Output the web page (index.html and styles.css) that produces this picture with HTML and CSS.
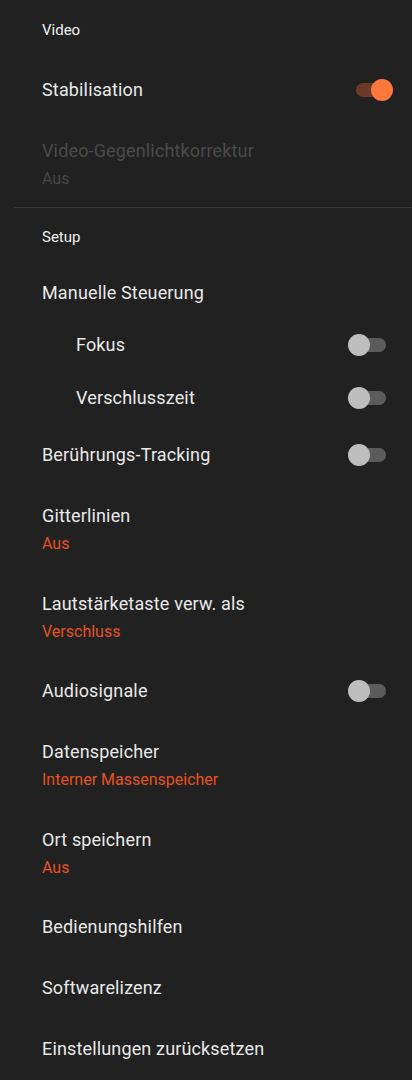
FILE: index.html
```html
<!DOCTYPE html>
<html lang="de">
<head>
    <meta charset="UTF-8">
    <meta name="viewport" content="width=device-width, initial-scale=1.0">
    <title>Kamera-Einstellungen</title>
    <link rel="stylesheet" href="styles.css">
</head>
<body>
    <div class="category first">Video</div>

    <div class="pref">
        <div class="pref-text">
            <div class="pref-title">Stabilisation</div>
        </div>
        <span class="switch on"></span>
    </div>

    <div class="pref disabled">
        <div class="pref-text">
            <div class="pref-title">Video-Gegenlichtkorrektur</div>
            <div class="pref-summary">Aus</div>
        </div>
    </div>

    <hr class="divider">

    <div class="category">Setup</div>

    <div class="pref parent">
        <div class="pref-text">
            <div class="pref-title">Manuelle Steuerung</div>
        </div>
    </div>

    <div class="pref sub">
        <div class="pref-text">
            <div class="pref-title">Fokus</div>
        </div>
        <span class="switch"></span>
    </div>

    <div class="pref sub">
        <div class="pref-text">
            <div class="pref-title">Verschlusszeit</div>
        </div>
        <span class="switch"></span>
    </div>

    <div class="pref">
        <div class="pref-text">
            <div class="pref-title">Berührungs-Tracking</div>
        </div>
        <span class="switch"></span>
    </div>

    <div class="pref">
        <div class="pref-text">
            <div class="pref-title">Gitterlinien</div>
            <div class="pref-summary">Aus</div>
        </div>
    </div>

    <div class="pref">
        <div class="pref-text">
            <div class="pref-title">Lautstärketaste verw. als</div>
            <div class="pref-summary">Verschluss</div>
        </div>
    </div>

    <div class="pref">
        <div class="pref-text">
            <div class="pref-title">Audiosignale</div>
        </div>
        <span class="switch"></span>
    </div>

    <div class="pref">
        <div class="pref-text">
            <div class="pref-title">Datenspeicher</div>
            <div class="pref-summary">Interner Massenspeicher</div>
        </div>
    </div>

    <div class="pref">
        <div class="pref-text">
            <div class="pref-title">Ort speichern</div>
            <div class="pref-summary">Aus</div>
        </div>
    </div>

    <div class="pref">
        <div class="pref-text">
            <div class="pref-title">Bedienungshilfen</div>
        </div>
    </div>

    <div class="pref">
        <div class="pref-text">
            <div class="pref-title">Softwarelizenz</div>
        </div>
    </div>

    <div class="pref">
        <div class="pref-text">
            <div class="pref-title">Einstellungen zurücksetzen</div>
        </div>
    </div>
</body>
</html>
```

FILE: styles.css
```css
body {
    margin: 0;
    background-color: #212121;
    color: #e9e9e9;
    font-family: Roboto, "Noto Sans", sans-serif;
    width: 412px;
    height: 1080px;
    overflow: hidden;
}

/* Abschnittsueberschrift */
.category {
    padding: 18.5px 0 15px 42px;
    font-size: 15px;
    line-height: 20px;
    color: #f2f2f2;
}
.category.first {
    padding-top: 20px;
    padding-bottom: 18.5px;
}

.divider {
    margin: 0 0 0 14px;
    border: 0;
    border-top: 1px solid #3a3a3a;
    height: 0;
}

/* Einstellungszeile */
.pref {
    display: flex;
    align-items: center;
    padding: 19px 0 18.3px 42px;
}
.pref-text {
    flex: 1;
}
.pref-title {
    font-size: 18px;
    line-height: 24px;
    letter-spacing: 0.15px;
}
.pref-summary {
    margin-top: 5px;
    font-size: 16px;
    line-height: 21px;
    color: #e6531f;
}
.pref.parent {
    padding-bottom: 13.5px;
}
.pref.sub {
    padding: 14.5px 0 14.5px 76px;
}
.pref.disabled .pref-title {
    color: #4b4b4b;
}
.pref.disabled .pref-summary {
    color: #464646;
}

/* Schalter */
.switch {
    position: relative;
    width: 38px;
    height: 22px;
    margin-right: 26px;
    flex-shrink: 0;
}
.switch::before {
    content: "";
    position: absolute;
    left: 3px;
    top: 4px;
    width: 35px;
    height: 14px;
    border-radius: 7px;
    background-color: #5c5c5c;
}
.switch::after {
    content: "";
    position: absolute;
    left: 0;
    top: 0;
    width: 22px;
    height: 22px;
    border-radius: 50%;
    background-color: #bebebe;
}
.switch.on {
    margin-right: 18px;
}
.switch.on::before {
    left: 0;
    background-color: #6b3a26;
}
.switch.on::after {
    left: 15px;
    background-color: #ff773a;
}
```
